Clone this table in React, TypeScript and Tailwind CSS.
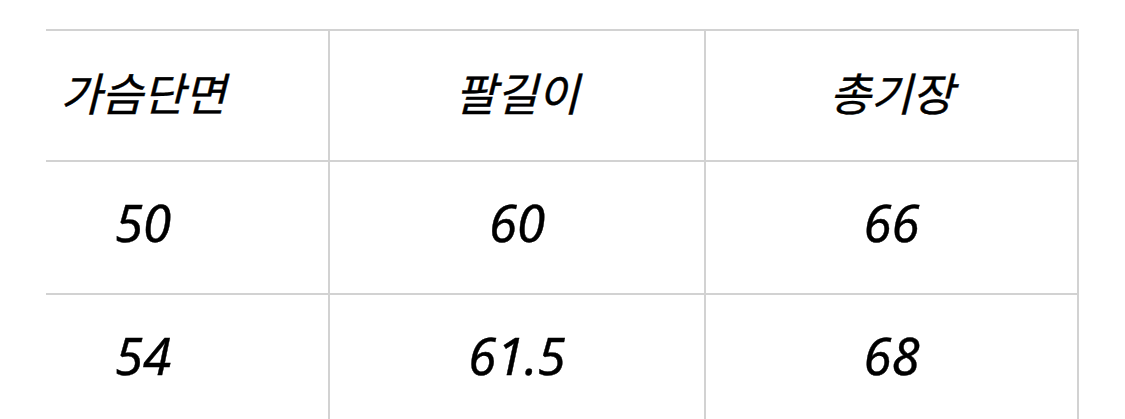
import React from "react";

const rows = [
  ["가슴단면", "팔길이", "총기장"],
  ["50", "60", "66"],
  ["54", "61.5", "68"],
];

export default function App() {
  return (
    <div className="w-[1125px] h-[419px] overflow-hidden bg-white pt-[29px] pl-[46px]">
      <div
        className="w-[1033px] border-t-2 border-r-2 border-[#d2d2d2] text-black italic [-webkit-text-stroke:0.4px_#000]"
        style={{ fontFamily: '"Noto Sans", "Noto Sans CJK KR", sans-serif' }}
      >
        {rows.map((r, i) => {
          const pad = i === 0 ? "pb-[4px]" : "pb-[11px]";
          return (
            <div
              key={i}
              className={`grid grid-cols-[284px_376px_371px] border-b-2 border-[#d2d2d2] ${
                i === 0 ? "h-[131px] text-[45px]" : "h-[133px] text-[51px]"
              }`}
            >
              <div className={`flex items-center justify-center pr-[88px] border-r-2 border-[#d2d2d2] ${pad}`}>
                {r[0]}
              </div>
              <div className={`flex items-center justify-center border-r-2 border-[#d2d2d2] ${pad}`}>
                {r[1]}
              </div>
              <div className={`flex items-center justify-center ${pad}`}>{r[2]}</div>
            </div>
          );
        })}
      </div>
    </div>
  );
}
